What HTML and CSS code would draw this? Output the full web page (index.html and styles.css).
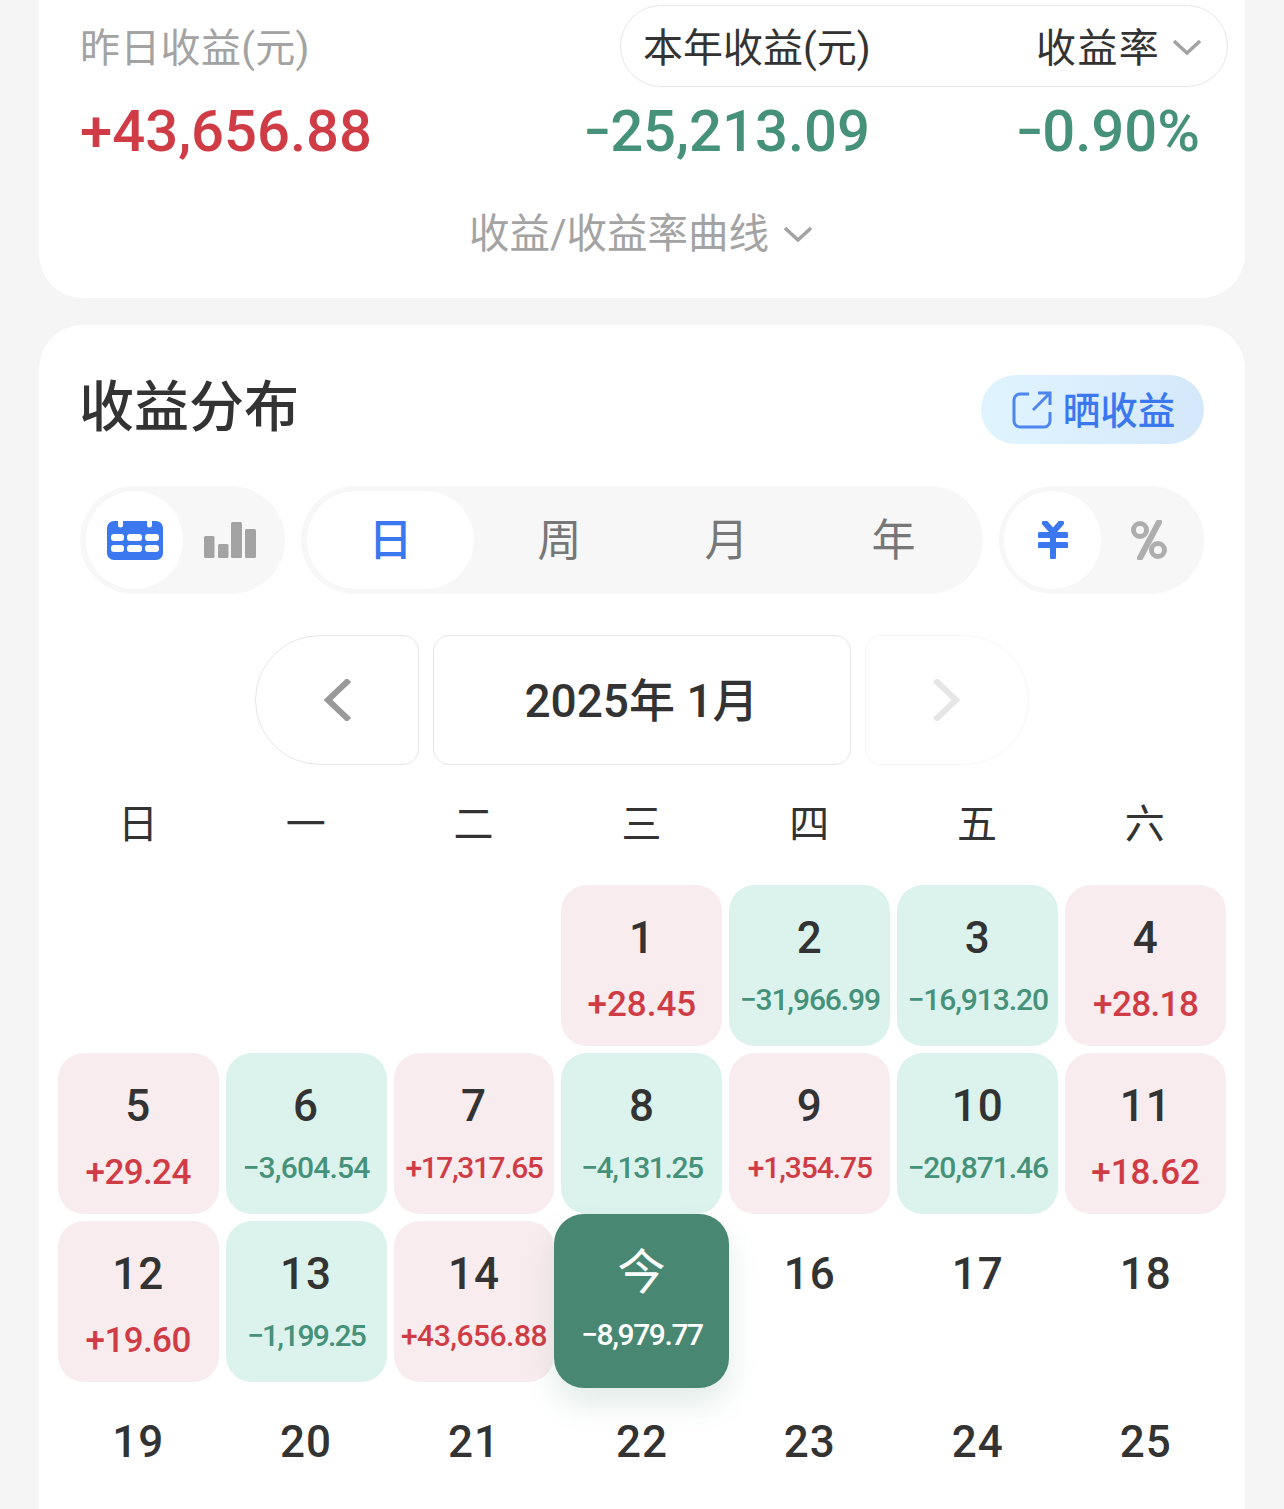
FILE: index.html
```html
<!DOCTYPE html>
<html lang="zh">
<head>
<meta charset="utf-8">
<title>收益分布</title>
<link rel="stylesheet" href="styles.css">
</head>
<body>
<div class="page">
  <section class="card summary">
    <div class="stats">
      <div class="label">昨日收益(元)</div>
      <div class="pill">
        <span>本年收益(元)</span>
        <span class="pill-right">收益率
          <svg class="chev" viewBox="0 0 28 16"><path d="M1 2l13 12L27 2"/></svg>
        </span>
      </div>
      <div class="value up">+43,656.88</div>
      <div class="value down right"><span class="neg">−</span>25,213.09</div>
      <div class="value down right"><span class="neg">−</span>0.90%</div>
    </div>
    <div class="curve">收益/收益率曲线
      <svg class="chev" viewBox="0 0 28 16"><path d="M1 2l13 12L27 2"/></svg>
    </div>
  </section>

  <section class="card dist">
    <header class="dist-head">
      <h2 class="title">收益分布</h2>
      <button class="share">
        <svg class="share-icon" viewBox="0 0 40 38"><path d="M17 3H8a6 6 0 0 0-6 6v21a6 6 0 0 0 6 6h24a6 6 0 0 0 6-6v-9"/><path d="M26 2h12v12M37 3L21 19"/></svg>
        晒收益
      </button>
    </header>

    <div class="controls">
      <div class="seg seg-icon seg-view">
        <div class="opt on">
          <svg class="cal" viewBox="0 0 56 40"><path fill="#3b78f0" fill-rule="evenodd" d="M7 1h4v4a2.500 2.500 0 0 0 5 0V1h24v4a2.500 2.500 0 0 0 5 0V1h4a7 7 0 0 1 7 7v25a7 7 0 0 1-7 7H7a7 7 0 0 1-7-7V8a7 7 0 0 1 7-7zM7 14a3 3 0 0 0-3 3v1a3 3 0 0 0 3 3h7a3 3 0 0 0 3-3v-1a3 3 0 0 0-3-3zm16 0a3 3 0 0 0-3 3v1a3 3 0 0 0 3 3h9a3 3 0 0 0 3-3v-1a3 3 0 0 0-3-3zm18 0a3 3 0 0 0-3 3v1a3 3 0 0 0 3 3h8a3 3 0 0 0 3-3v-1a3 3 0 0 0-3-3zM7 25a3 3 0 0 0-3 3v1a3 3 0 0 0 3 3h7a3 3 0 0 0 3-3v-1a3 3 0 0 0-3-3zm16 0a3 3 0 0 0-3 3v1a3 3 0 0 0 3 3h9a3 3 0 0 0 3-3v-1a3 3 0 0 0-3-3zm18 0a3 3 0 0 0-3 3v1a3 3 0 0 0 3 3h8a3 3 0 0 0 3-3v-1a3 3 0 0 0-3-3z"/></svg>
        </div>
        <div class="opt">
          <svg class="bars" viewBox="0 0 52 36" fill="#a3a3a3"><rect x="0" y="14" width="10.500" height="22" rx="1.500"/><rect x="14" y="22" width="10.500" height="14" rx="1.500"/><rect x="27" y="0" width="11" height="36" rx="1.500"/><rect x="41" y="7" width="11" height="29" rx="1.500"/></svg>
        </div>
      </div>
      <div class="seg seg-tabs">
        <div class="opt on">日</div>
        <div class="opt">周</div>
        <div class="opt">月</div>
        <div class="opt">年</div>
      </div>
      <div class="seg seg-icon">
        <div class="opt on">
          <svg class="yen" viewBox="0 0 30 38"><path d="M7 2l8 9 8-9M2 14h26M2 24h26M15 11v25" fill="none" stroke="#3b78f0" stroke-width="6" stroke-linecap="round" stroke-linejoin="round"/></svg>
        </div>
        <div class="opt">
          <svg class="pct" viewBox="0 0 36 40"><path d="M28 2L9 38" stroke="#aeaeae" stroke-width="6" stroke-linecap="round"/><circle cx="9" cy="10" r="6.500" fill="none" stroke="#aeaeae" stroke-width="5"/><circle cx="27" cy="30" r="6.500" fill="none" stroke="#aeaeae" stroke-width="5"/></svg>
        </div>
      </div>
    </div>

    <nav class="month-nav">
      <div class="nav-btn prev"><svg class="arrow" viewBox="0 0 28 42"><path d="M26 1L5 21l21 20"/></svg></div>
      <div class="month">2025年 1月</div>
      <div class="nav-btn next"><svg class="arrow" viewBox="0 0 28 42"><path d="M2 1l21 20L2 41"/></svg></div>
    </nav>

    <div class="calendar">
      <div class="grid weekdays">
        <div>日</div><div>一</div><div>二</div><div>三</div><div>四</div><div>五</div><div>六</div>
      </div>
      <div class="grid days">
        <div class="day blank"></div><div class="day blank"></div><div class="day blank"></div>
        <div class="day up-cell"><b>1</b><span class="amt big">+28.45</span></div>
        <div class="day down-cell"><b>2</b><span class="amt ls-c">−31,966.99</span></div>
        <div class="day down-cell"><b>3</b><span class="amt ls-c">−16,913.20</span></div>
        <div class="day up-cell"><b>4</b><span class="amt big fit">+28.18</span></div>

        <div class="day up-cell"><b>5</b><span class="amt big fit">+29.24</span></div>
        <div class="day down-cell"><b>6</b><span class="amt ls-b">−3,604.54</span></div>
        <div class="day up-cell"><b>7</b><span class="amt ls-d">+17,317.65</span></div>
        <div class="day down-cell"><b>8</b><span class="amt ls-d">−4,131.25</span></div>
        <div class="day up-cell"><b>9</b><span class="amt ls-c">+1,354.75</span></div>
        <div class="day down-cell"><b>10</b><span class="amt ls-c">−20,871.46</span></div>
        <div class="day up-cell"><b>11</b><span class="amt big">+18.62</span></div>

        <div class="day up-cell"><b>12</b><span class="amt big fit">+19.60</span></div>
        <div class="day down-cell"><b>13</b><span class="amt ls-e">−1,199.25</span></div>
        <div class="day up-cell"><b>14</b><span class="amt ls-a">+43,656.88</span></div>
        <div class="day today"><b>今</b><span class="amt ls-d">−8,979.77</span></div>
        <div class="day"><b>16</b></div>
        <div class="day"><b>17</b></div>
        <div class="day"><b>18</b></div>

        <div class="day"><b>19</b></div>
        <div class="day"><b>20</b></div>
        <div class="day"><b>21</b></div>
        <div class="day"><b>22</b></div>
        <div class="day"><b>23</b></div>
        <div class="day"><b>24</b></div>
        <div class="day"><b>25</b></div>
      </div>
    </div>
  </section>
</div>
</body>
</html>
```
FILE: styles.css
```css
* { box-sizing: border-box; }
html, body { margin: 0; padding: 0; }
body {
  background: #f5f5f5;
  font-family: Roboto, "Noto Sans CJK SC", sans-serif;
  color: #333;
}
.page {
  height: 1509px;
  overflow: hidden;
  display: flex;
  flex-direction: column;
  gap: 27px;
  padding: 0 39px;
}
.card { background: #fff; }
.summary {
  height: 298px;
  flex: none;
  border-radius: 0 0 44px 44px;
  padding: 5px 45px 0 42px;
}
.stats {
  display: grid;
  grid-template-columns: 539px 250px 330px;
  grid-template-rows: 82px auto;
}
.label {
  font-size: 40px;
  color: #a3a3a3;
  align-self: center;
  line-height: 1;
  letter-spacing: .3px;
  padding-top: 6px;
  margin-left: -1px;
}
.pill {
  grid-column: 2 / 4;
  margin-right: -28px;
  border: 1px solid #e6e6e6;
  border-radius: 41px;
  display: flex;
  justify-content: space-between;
  align-items: center;
  padding: 0 26px 2px 22px;
  font-size: 40px;
  color: #333;
}
.pill-right { display: flex; align-items: center; gap: 13px; letter-spacing: 1.300px; }
.pill-right .chev { margin-top: 3px; }
.chev { width: 28px; height: 16px; fill: none; stroke: #a3a3a3; stroke-width: 3.500; }
.value {
  font-size: 58px;
  font-weight: 500;
  line-height: 70px;
  margin-top: 9px;
  white-space: nowrap;
}
.neg { font-size: 48px; font-weight: 700; vertical-align: 3px; }
.right { justify-self: end; }
.up { color: #d03c45; margin-left: -1px; }
.down { color: #46917a; }
.curve {
  margin-top: 37px;
  display: flex;
  justify-content: center;
  align-items: center;
  gap: 15px;
  font-size: 40.500px;
  line-height: 60px;
  color: #a3a3a3;
}
.curve .chev { margin-top: 0; }
.dist {
  flex: 1;
  border-radius: 44px 44px 0 0;
  padding: 50px 41px 0 42px;
}
.dist-head {
  display: flex;
  justify-content: space-between;
  align-items: center;
  height: 69px;
}
.title {
  margin: 0 0 0 -2px;
  font-size: 55px;
  font-weight: 500;
  color: #333;
  line-height: 1;
  padding-bottom: 4px;
}
.share {
  width: 223px;
  height: 69px;
  border: 0;
  border-radius: 35px;
  background: linear-gradient(90deg, #e0f4ff, #d5e8fb);
  color: #3b78f0;
  font: 500 37.500px Roboto, "Noto Sans CJK SC", sans-serif;
  display: flex;
  align-items: center;
  justify-content: center;
  gap: 11px;
  padding: 0 0 4px 2px;
}
.share-icon { width: 40px; height: 38px; fill: none; stroke: #4c86ee; stroke-width: 3; margin-top: 4px; }
.controls {
  margin: 42px -1px 0;
  display: grid;
  grid-template-columns: 205px 682px 205px;
  gap: 16px;
}
.seg {
  height: 108px;
  border-radius: 54px;
  background: #f7f7f7;
  padding: 5px;
  display: flex;
  align-items: stretch;
}
.seg-view { padding-left: 6px; }
.opt {
  flex: 1;
  display: flex;
  align-items: center;
  justify-content: center;
  border-radius: 49px;
  font-size: 44px;
  color: #777;
}
.opt.on { background: #fff; color: #3b78f0; font-weight: 500; }
.seg-icon .opt { flex: 0 0 97px; }
.seg-tabs { padding: 5px 6px; }
.seg-tabs .opt { flex: 1; padding-bottom: 6px; }
.seg-tabs .opt.on { margin-right: 2px; }
.cal { width: 56px; height: 40px; }
.bars { width: 52px; height: 36px; margin-left: -4px; }
.yen { width: 30px; height: 38px; }
.pct { width: 36px; height: 40px; margin-left: -2px; }
.month-nav {
  margin-top: 41px;
  display: flex;
  justify-content: center;
  gap: 14px;
  height: 130px;
  padding-right: 2px;
}
.nav-btn {
  width: 164px;
  border: 1px solid #e6e6e6;
  display: flex;
  align-items: center;
  justify-content: center;
}
.prev { border-radius: 65px 16px 16px 65px; }
.next { border-radius: 16px 65px 65px 16px; border-color: #f6f6f6; }
.arrow { width: 28px; height: 42px; fill: none; stroke: #999; stroke-width: 6; }
.next .arrow { stroke: #e6e6e6; }
.month {
  width: 418px;
  border: 1px solid #e6e6e6;
  border-radius: 16px;
  display: flex;
  align-items: center;
  justify-content: center;
  font-size: 46px;
  font-weight: 500;
  color: #333;
  padding-bottom: 7px;
}
.calendar { margin: 0 -22.100px 0 -23.300px; }
.grid { display: grid; grid-template-columns: repeat(7, 1fr); gap: 7px; }
.weekdays {
  margin-top: 29px;
  height: 60px;
  align-items: center;
  text-align: center;
  font-size: 40px;
  line-height: 62px;
  color: #333;
  padding-right: 1px;
}
.days { margin-top: 31px; grid-auto-rows: 161px; }
.day {
  border-radius: 26px;
  display: flex;
  flex-direction: column;
  align-items: center;
  padding-top: 25px;
  min-width: 0;
}
.day b { font-size: 44px; font-weight: 500; line-height: 56px; color: #333; letter-spacing: 1px; }
.amt { font-size: 30px; font-weight: 500; line-height: 36px; margin-top: 16px; white-space: nowrap; }
.amt.big { font-size: 35px; margin-top: 21px; }
.amt.fit { letter-spacing: -.6px; }
.ls-a { letter-spacing: -.5px; }
.ls-b { letter-spacing: -.8px; }
.ls-c { letter-spacing: -1.100px; }
.ls-d { letter-spacing: -1.400px; }
.ls-e { letter-spacing: -1.800px; }
.up-cell { background: #f9ecee; }
.up-cell .amt { color: #d03c45; }
.down-cell { background: #dcf3ed; }
.down-cell .amt { color: #46917a; }
.blank { background: none; }
.today {
  margin: -7px -7px -6px;
  padding-top: 31px;
  background: #488872;
  border-radius: 30px;
  box-shadow: 0 16px 30px rgba(72, 136, 114, .16);
  position: relative;
}
.today b { color: #fff; font-weight: 400; font-size: 48px; }
.today .amt { color: #fff; }
```
